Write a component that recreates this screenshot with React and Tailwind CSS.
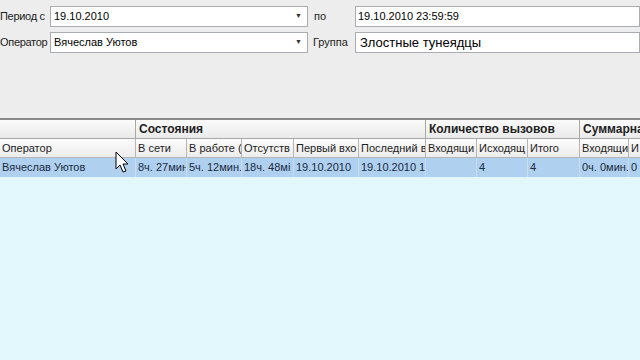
const groups = [
  { label: '', w: 136 },
  { label: 'Состояния', w: 290 },
  { label: 'Количество вызовов', w: 154 },
  { label: 'Суммарна', w: 80 },
];

const cols = [
  { label: 'Оператор', w: 136, value: 'Вячеслав Уютов' },
  { label: 'В сети', w: 51, value: '8ч. 27мин' },
  { label: 'В работе (', w: 55, value: '5ч. 12мин.' },
  { label: 'Отсутств', w: 52, value: '18ч. 48мі' },
  { label: 'Первый вхо', w: 65, value: '19.10.2010 ' },
  { label: 'Последний в', w: 67, value: '19.10.2010 1' },
  { label: 'Входящи', w: 51, value: '' },
  { label: 'Исходящ', w: 51, value: '4' },
  { label: 'Итого', w: 52, value: '4' },
  { label: 'Входящи', w: 49, value: '0ч. 0мин.' },
  { label: 'И', w: 30, value: '0' },
];

function Combo({ value }) {
  return (
    <div className="flex h-[21px] w-[258px] items-center border border-[#a9acb0] bg-white pl-[3px]">
      <span className="flex-1 text-[11px] text-black">{value}</span>
      <span className="mr-[5px] text-[7px] text-[#333]">▼</span>
    </div>
  );
}

function Cursor() {
  return (
    <svg className="absolute left-[115px] top-[151px]" width="15" height="24" viewBox="0 0 15 24">
      <path d="M1 1 L1 18 L5 14 L8 21 L11 20 L8 13 L13 13 Z" fill="#fff" stroke="#000" strokeWidth="1" />
    </svg>
  );
}

export default function App() {
  return (
    <div
      className="relative flex h-[360px] w-[640px] flex-col overflow-hidden bg-[#e3f8fc] text-[11px] text-black"
      style={{ fontFamily: '"Liberation Sans", Arial, sans-serif' }}
    >
      <div className="flex h-[118px] flex-col gap-[5px] bg-[#ecedec] pt-[6px]">
        <div className="flex items-center">
          <span className="w-[50px] whitespace-nowrap tracking-[-0.3px] text-[#222]">Период с</span>
          <Combo value="19.10.2010" />
          <span className="w-[47px] pl-[6px] text-[#222]">по</span>
          <div className="flex h-[21px] flex-1 items-center border border-[#a9acb0] bg-white pl-[2px]">
            19.10.2010 23:59:59
          </div>
        </div>
        <div className="flex items-center">
          <span className="w-[50px] whitespace-nowrap tracking-[-0.3px] text-[#222]">Оператор</span>
          <Combo value="Вячеслав Уютов" />
          <span className="w-[47px] pl-[5px] text-[#222]">Группа</span>
          <div className="flex h-[21px] flex-1 items-center border border-[#a9acb0] bg-white pl-[4px] text-[13px]">
            Злостные тунеядцы
          </div>
        </div>
      </div>
      <div className="flex flex-col border-t-2 border-[#8a8a8a]">
        <div className="flex h-[19px] bg-gradient-to-b from-[#fbfbfb] to-[#e9e9e9]">
          {groups.map((g, i) => (
            <div
              key={i}
              className="flex shrink-0 items-center whitespace-nowrap overflow-hidden border-r border-b border-[#a7a7a7] pl-[3px] text-[12px] font-bold text-[#222]"
              style={{ width: g.w }}
            >
              {g.label}
            </div>
          ))}
        </div>
        <div className="flex h-[19px] bg-gradient-to-b from-[#fbfbfb] to-[#ececec]">
          {cols.map((c, i) => (
            <div
              key={i}
              className="flex shrink-0 items-center overflow-hidden whitespace-nowrap border-r border-b border-[#b5b5b5] pl-[2px] text-[#222]"
              style={{ width: c.w }}
            >
              {c.label}
            </div>
          ))}
        </div>
        <div className="flex h-[19px] bg-[#afd0ef]">
          {cols.map((c, i) => (
            <div
              key={i}
              className="flex shrink-0 items-center overflow-hidden whitespace-nowrap border-r border-[#c7dcf1] pl-[2px] text-[#1a2a40]"
              style={{ width: c.w }}
            >
              {c.value}
            </div>
          ))}
        </div>
      </div>
      <Cursor />
    </div>
  );
}
